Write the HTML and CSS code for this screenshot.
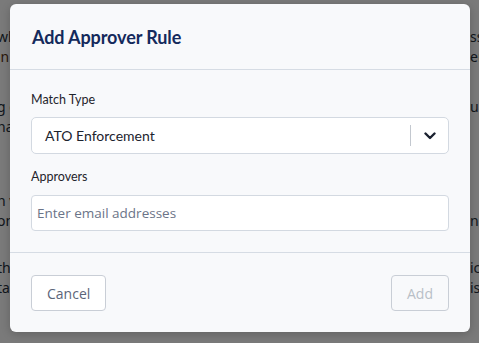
FILE: index.html
```html
<!DOCTYPE html>
<html lang="en">
<head>
  <meta charset="UTF-8" />
  <title>Add Approver Rule</title>
  <link rel="stylesheet" href="styles.css">
</head>
<body>

  <!-- page behind the modal -->
  <div class="page">
    <div class="row"><span>when</span><span class="end">ssing</span></div>
    <div class="row"><span class="link">in</span><span class="end">enabled</span></div>
    <div class="row gap"><span>g c</span><span class="end">ules</span></div>
    <div class="row"><span>na</span><span class="end"></span></div>
    <div class="row gap2"><span>n v</span><span class="end"></span></div>
    <div class="row"><span>on</span><span class="end">nput</span></div>
    <div class="row gap3"><span>th</span><span class="end">ick</span></div>
    <div class="row"><span>ta</span><span class="end">isted</span></div>
  </div>

  <div class="overlay"></div>

  <div class="modal">
    <div class="modal-header">
      <h2>Add Approver Rule</h2>
    </div>

    <div class="modal-body">
      <label class="field-label">Match Type</label>
      <div class="select">
        <span class="select-value">ATO Enforcement</span>
        <span class="select-sep"></span>
        <span class="select-arrow">
          <svg width="12" height="8" viewBox="0 0 12 8">
            <path d="M1.5 1.5 L6 6 L10.5 1.5" fill="none" stroke="#1b2230" stroke-width="2.4" stroke-linecap="round" stroke-linejoin="round"/>
          </svg>
        </span>
      </div>

      <label class="field-label second">Approvers</label>
      <input class="text-input" type="text" placeholder="Enter email addresses">
    </div>

    <div class="modal-footer">
      <button class="btn">Cancel</button>
      <button class="btn disabled" disabled>Add</button>
    </div>
  </div>

</body>
</html>
```

FILE: styles.css
```css
body {
  margin: 0;
  width: 479px;
  height: 343px;
  overflow: hidden;
  font-family: 'Lato', sans-serif;
  background: #fff;
  position: relative;
}

.page {
  padding-top: 27px;
  font-family: 'Noto Sans', sans-serif;
  font-size: 14px;
  color: #27313c;
  overflow: hidden;
}

.row {
  display: flex;
  justify-content: space-between;
  height: 20px;
  line-height: 20px;
  margin-left: -3px;
}

.row .end {
  width: 9px;
  white-space: nowrap;
}

.row .link {
  color: #5a3414;
}

.gap { margin-top: 30px; }
.gap2 { margin-top: 54px; }
.gap3 { margin-top: 27px; }

.overlay {
  position: absolute;
  inset: 0;
  background: rgba(0, 0, 0, 0.52);
}

.modal {
  position: absolute;
  left: 10px;
  top: 4px;
  width: 460px;
  height: 328px;
  background: #f8f9fb;
  border-radius: 6px;
  box-shadow: 0 2px 10px rgba(0, 0, 0, 0.2);
  display: flex;
  flex-direction: column;
}

.modal-header {
  height: 65px;
  padding: 0 22px;
  display: flex;
  align-items: center;
  border-bottom: 1px solid #d6dce4;
}

.modal-header h2 {
  margin: 0;
  font-size: 18px;
  font-weight: 700;
  color: #142a5c;
  letter-spacing: -0.1px;
}

.modal-body {
  padding: 20px 21px 21px;
  border-bottom: 1px solid #d6dce4;
}

.field-label {
  display: block;
  font-size: 12.5px;
  line-height: 20px;
  color: #1f242c;
  margin-bottom: 7px;
}

.field-label.second {
  margin-top: 13px;
  margin-bottom: 8px;
}

.select {
  height: 37px;
  box-sizing: border-box;
  background: #fff;
  border: 1px solid #d3d9e1;
  border-radius: 5px;
  display: flex;
  align-items: center;
  padding-left: 13px;
}

.select-value {
  flex: 1;
  font-size: 14px;
  color: #1c232e;
}

.select-sep {
  width: 1px;
  height: 21px;
  background: #c3c8cf;
}

.select-arrow {
  width: 37px;
  display: flex;
  justify-content: center;
  align-items: center;
}

.text-input {
  display: block;
  width: 100%;
  height: 36px;
  box-sizing: border-box;
  border: 1px solid #d3d9e1;
  border-radius: 4px;
  background: #fff;
  padding: 0 5px;
  font-family: 'Open Sans', sans-serif;
  font-size: 13.5px;
  color: #1c232e;
  outline: none;
}

.text-input::placeholder {
  color: #6b7488;
}

.modal-footer {
  flex: 1;
  padding: 22px 21px 0;
  display: flex;
  justify-content: space-between;
  align-items: flex-start;
}

.btn {
  height: 36px;
  padding: 0 15px;
  background: #fff;
  border: 1px solid #c9ced6;
  border-radius: 4px;
  font-family: 'Open Sans', sans-serif;
  font-size: 14px;
  color: #5b6579;
  cursor: pointer;
}

.btn.disabled {
  background: transparent;
  color: #b9bfc7;
  cursor: default;
}
```
